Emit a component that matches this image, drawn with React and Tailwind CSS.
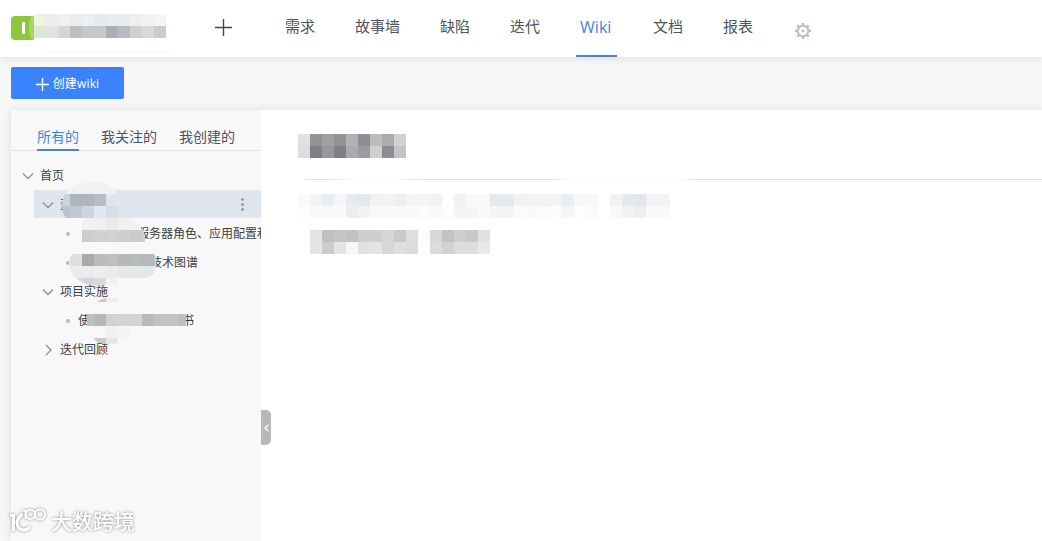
import { clsx } from 'clsx';

const NAV_ITEMS = ['需求', '故事墙', '缺陷', '迭代', 'Wiki', '文档', '报表'];
const TABS = ['所有的', '我关注的', '我创建的'];
const CELL = 12;

const TITLE_ROWS = [
  ['#e0e1e3', '#929397', '#9fa0a3', '#929397', '#b1b2b6', '#8e8f94', '#bbbcbe', '#abacaf', '#d0d1d3'],
  ['#dddee0', '#7e7f83', '#96979b', '#7f8084', '#a9aaad', '#9b9ca1', '#cfcfd2', '#8c8d92', '#c2c3c5'],
];

const META_ROWS = [
  ['#f9fafa', '#f3f4f6', '#ebeef1', '#f4f6f8', '#e7eaee', '#e4e8ec', '#f0f2f4', '#f1f3f4', '#edf0f3', '#f2f4f6', '#f4f5f7', '#f0f2f4', '#fdfefe', '#f0f3f5', '#f7f8fa', '#f7f8fa', '#e5e9ec', '#e5e9ec', '#f0f2f4', '#f1f3f4', '#f1f3f4', '#f2f3f5', '#ebeef1', '#f5f7f8', '#f5f7f8', null, '#f0f2f4', '#e5e9ec', '#e3e7eb', '#f1f3f5', '#f1f3f5'],
  ['#fdfdfd', '#f8f9fb', '#f7f8fa', '#fafafb', '#ebedf1', '#f0f1f4', '#f8f9fa', '#fafafb', '#fafafb', '#fafafb', '#fcfdfd', '#fafafa', '#fdfdfd', '#f4f5f7', '#f4f5f7', '#f8f9fa', '#f4f5f7', '#f2f4f5', '#fbfbfc', '#f9fafb', '#fafbfc', '#fbfcfc', '#f3f5f7', '#fdfdfd', '#fafbfc', null, '#f8f9fb', '#f0f2f4', '#eceef1', '#f8f9fa', '#f8f9fa'],
];

const BODY_ROWS = [
  ['#e4e4e4', '#c0c0c0', '#c5c5c5', '#c1c1c1', '#cecece', '#cfcfcf', '#d6d6d6', '#cacaca', '#dedede', '#fcfcfc', '#d8d8d8', '#c3c3c3', '#cfcfcf', '#c8c8c8', '#e1e1e1'],
  ['#e4e4e4', '#cccccc', '#e4e4e4', '#f7f7f7', '#e1e1e1', '#e4e4e4', '#d7d7d7', '#dfdfdf', '#dcdcdc', '#fdfdfd', '#dcdcdc', '#d2d2d2', '#dddddd', '#dddddd', '#e8e8e8'],
];

const LOGO_ROWS = [
  ['#edf4e1', '#ededee', '#f0f0f1', '#ebecec', '#eeeff0', '#e8e9ea', '#ebecee', '#e9eaec', '#eef0f0', '#f1f2f2', '#f4f5f5'],
  ['#dfe6d6', '#e0e2e4', '#d4d6d9', '#bcc0c4', '#c6c9cc', '#c6c9cc', '#abb0b6', '#b7bbc2', '#ced0d4', '#d8d9dd', '#c9ccd0'],
];

function Mosaic({ rows, className }) {
  return (
    <div className={clsx('w-fit', className)}>
      {rows.map((row, y) => (
        <div key={y} className="flex">
          {row.map((color, x) => (
            <span key={x} className="size-3" style={{ backgroundColor: color ?? 'transparent' }} />
          ))}
        </div>
      ))}
    </div>
  );
}

function Cells({ x, y, colors }) {
  return colors.map((color, i) => (
    <rect key={i} x={x + i * CELL} y={y} width={CELL} height={CELL} fill={color} />
  ));
}

function Chevron({ open, className }) {
  return (
    <svg className={clsx('shrink-0', className)} width="12" height="12" viewBox="0 0 12 12" fill="none" stroke="#8a94a3" strokeWidth="1.4">
      <path d={open ? 'M1 3.5 6 8.5 11 3.5' : 'M4 1 9 6 4 11'} />
    </svg>
  );
}

function PlusIcon({ size, className }) {
  return (
    <svg className={className} width={size} height={size} viewBox={`0 0 ${size} ${size}`} fill="none" stroke="currentColor" strokeWidth="1.4">
      <path d={`M${size / 2} 0V${size}M0 ${size / 2}H${size}`} />
    </svg>
  );
}

function GearIcon() {
  return (
    <svg className="mt-2 ml-11" width="16" height="16" viewBox="0 0 16 16" fill="none" stroke="#b4bfc3">
      <circle cx="8" cy="8" r="5.3" strokeWidth="1.9" />
      <circle cx="8" cy="8" r="1.4" fill="#b4bfc3" stroke="none" />
      <path strokeWidth="2.4" d="M8 0v2M8 14v2M0 8h2M14 8h2M2.3 2.3l1.4 1.4M12.3 12.3l1.4 1.4M2.3 13.7l1.4-1.4M12.3 3.7l1.4-1.4" />
    </svg>
  );
}

function Header() {
  return (
    <header className="relative z-10 flex h-[57px] shrink-0 items-start bg-white shadow-[0_1px_8px_rgba(0,20,40,0.11)]">
      <div className="relative mt-4 ml-[11px] flex h-6 w-[155px] items-center rounded-sm">
        <span className="flex h-6 w-6 items-center justify-center rounded-l-sm bg-[#8bc83c]">
          <i className="h-3 w-[3px] bg-white" />
        </span>
        <svg className="absolute -top-2 left-0" width="165" height="48" viewBox="11 8 165 48">
          <path d="M34 16v24h-2c-4-6-4-18-1-24Z" fill="#a5d46b" />
          <path d="M34 14h132v34H40q-6-4-6-10Z" fill="#fff" />
          <path d="M39 50h132q-5 4-17 4l-38-1H55q-12 0-16-3Z" fill="#f9fafa" />
        </svg>
        <Mosaic rows={LOGO_ROWS} className="absolute -top-0.5 left-[23px]" />
      </div>
      <PlusIcon size={17} className="mt-[19px] ml-[49px] text-[#414854]" />
      <nav className="ml-[49px] flex h-[57px] gap-8">
        {NAV_ITEMS.map((item) => (
          <a
            key={item}
            className={clsx(
              'h-full border-b-2 px-1 leading-[22px]',
              item === 'Wiki'
                ? 'w-[41px] border-[#4a83d4] pt-4 text-[16px] text-[#4184e4]'
                : 'border-transparent pt-[15px] text-[15px] text-[#4d545e]',
            )}
          >
            {item}
          </a>
        ))}
      </nav>
      <div className="-ml-1.5 pt-[15px]">
        <GearIcon />
      </div>
    </header>
  );
}

function TreeItem({ label, icon, className }) {
  return (
    <li className={clsx('flex h-[29px] items-center whitespace-nowrap', className)}>
      {icon === 'dot' ? (
        <span className="mr-2 size-1 shrink-0 rounded-full bg-[#b3b9c1]" />
      ) : (
        <Chevron open={icon === 'open'} className="mr-1.5" />
      )}
      {label}
    </li>
  );
}

// Erased patches over the private parts of the tree labels.
function TreeSmudges() {
  return (
    <svg className="pointer-events-none absolute top-[70px] left-[50px]" width="140" height="170" viewBox="61 180 140 170">
      <defs>
        <clipPath id="smudge-a">
          <path d="M62 206q0-12 8-17 8-7 24-7t24 12v24H67q-5-4-5-12Z" />
        </clipPath>
        <clipPath id="smudge-b">
          <path d="M82 218h40q16 2 20 12h2l1 12H82Z" />
        </clipPath>
        <clipPath id="smudge-c">
          <path d="M72 254h82q3 3 2 12-2 12-12 12h-26v6q-24 4-34-1-14-6-15-17 0-8 3-12Z" />
        </clipPath>
      </defs>
      <g clipPath="url(#smudge-a)">
        <rect x="60" y="180" width="60" height="14" fill="#eff1f3" />
        <Cells x={58} y={194} colors={['#ccd3dc', '#adb5be', '#b0b6bf', '#b7bdc7', '#dfe5ec']} />
        <Cells x={58} y={206} colors={['#b9c2cd', '#bfc8d3', '#cdd5de', '#e0e7ef', '#d5dee6']} />
      </g>
      <g clipPath="url(#smudge-b)">
        <Cells x={82} y={218} colors={['#f1f1f2', '#efefef', '#e9eaeb', '#eeeff0', '#f1f1f2', '#f2f2f3']} />
        <Cells x={82} y={230} colors={['#cdcdce', '#d0d0d1', '#d2d2d3', '#cfcfd0', '#cacbcc', '#cfd0d1']} />
      </g>
      <g clipPath="url(#smudge-c)">
        <Cells x={58} y={254} colors={['#eeeeef', '#dedfe0', '#a9aaac', '#babbbd', '#bdbec0', '#b5b7b8', '#b9babc', '#b7b8ba', '#c7c8ca']} />
        <Cells x={58} y={266} colors={['#efefef', '#ebebec', '#ececed', '#eeeeef', '#eaeaeb', '#e4e8e7', '#e5e8e8', '#e4e7e7', '#eaecec']} />
        <Cells x={70} y={278} colors={['#dbdcdd', '#d3d4d5', '#d9dadb', '#f1f1f1']} />
      </g>
      <path d="M97 302q4-3 9-4v4Z" fill="#c7c8ca" />
      <path d="M106 298h12v4h-12Z" fill="#ececed" />
      <Cells x={94} y={314} colors={['#b6b7ba', '#d1d2d5', '#d3d4d6', '#d3d4d6', '#b9babd', '#c1c2c4', '#c3c4c6']} />
      <rect x="87" y="314" width="7" height="12" fill="#bebfc2" />
      <rect x="178" y="314" width="8" height="12" fill="#bcbdc0" />
      <Cells x={106} y={326} colors={['#f0f1f1', '#f3f4f4']} />
      <path d="M93 338h13v7q-8-1-13-7Z" fill="#c8c9cb" />
      <path d="M106 338h12v5l-12 2Z" fill="#e7e7e8" />
    </svg>
  );
}

function Sidebar() {
  return (
    <aside className="relative w-[250px] shrink-0 bg-[#f8f8f8] text-[#3a3f48]">
      <div className="flex h-[41px] gap-[22px] border-b border-[#e0e3e8] pl-[26px]">
        {TABS.map((tab, i) => (
          <button
            key={tab}
            className={clsx(
              'h-[41px] border-b-2 pt-3.5 text-[14px] leading-5',
              i === 0 ? 'border-[#4a83d4] text-[#4184e4]' : 'border-transparent text-[#4d545e]',
            )}
          >
            {tab}
          </button>
        ))}
      </div>
      <ul className="overflow-hidden pt-2.5 text-[12px]">
        <TreeItem icon="open" label="首页" className="pt-px pl-[11px]" />
        <li className="mb-px ml-[23px] flex h-[28px] items-center bg-[#dfe5ed] pt-px pl-2">
          <Chevron open className="mr-1.5" />
          <span className="w-3">蓝</span>
          <svg className="ml-auto mr-[17px]" width="3" height="13" viewBox="0 0 3 13" fill="#7f8997">
            <circle cx="1.5" cy="1.5" r="1.3" />
            <circle cx="1.5" cy="6.5" r="1.3" />
            <circle cx="1.5" cy="11.5" r="1.3" />
          </svg>
        </li>
        <TreeItem icon="dot" label={<span className="pl-[59px]">服务器角色、应用配置和</span>} className="pl-[55px]" />
        <TreeItem icon="dot" label={<span className="pl-[72px]">技术图谱</span>} className="pl-[55px]" />
        <TreeItem icon="open" label="项目实施" className="relative z-10 pl-[31px]" />
        <TreeItem
          icon="dot"
          label={<><span>使</span><span className="ml-[92px]">书</span></>}
          className="pl-[55px]"
        />
        <TreeItem icon="closed" label="迭代回顾" className="relative z-10 pl-[31px]" />
      </ul>
      <TreeSmudges />
      <button className="absolute top-[300px] left-full flex h-[35px] w-2.5 items-center justify-center rounded-r-[5px] bg-[#b8b8b8]">
        <svg width="5" height="8" viewBox="0 0 5 8" fill="none" stroke="#fff" strokeWidth="1.5">
          <path d="M4.5.7 1 4l3.5 3.3" />
        </svg>
      </button>
    </aside>
  );
}

function Content() {
  return (
    <main className="min-w-0 flex-1 bg-white pl-[37px]">
      <Mosaic rows={TITLE_ROWS} className="mt-6" />
      <div className="mt-[21px] ml-[7px] h-px bg-[linear-gradient(to_right,#e0e0e2_0,#e0e0e2_25px,#fafafa_50px,#fafafa_90px,#e0e0e2_115px,#e0e0e2_250px,#fafafa_262px,#fafafa_378px,#e0e0e2_390px)]" />
      <Mosaic rows={META_ROWS} className="mt-[14px]" />
      <Mosaic rows={BODY_ROWS} className="mt-3 ml-3" />
    </main>
  );
}

function Watermark() {
  return (
    <div className="absolute top-[506px] left-[9px] flex text-white drop-shadow-[0_0_1.5px_rgba(0,0,0,0.45)]">
      <svg width="39" height="28" viewBox="0 0 39 28" fill="none" stroke="currentColor">
        <path strokeWidth="3" d="M1 9.5h3.5V25" />
        <path strokeWidth="3" d="M13 7.5 9 13q-2.500 5 1 9 5 4.500 11-1" />
        <path strokeWidth="1.8" d="M14 4.500h2.500V13" />
        <circle cx="21.500" cy="8.500" r="4.600" strokeWidth="1.8" />
        <circle cx="31" cy="8.500" r="5.200" strokeWidth="1.8" />
      </svg>
      <span className="ml-[3px] text-[21px] leading-[31px] font-medium">大数跨境</span>
    </div>
  );
}

export default function App() {
  return (
    <div className="relative flex h-[541px] w-[1042px] flex-col overflow-hidden bg-[#f7f7f7] font-['Open_Sans','Noto_Sans_CJK_SC',sans-serif]">
      <Header />
      <div className="flex h-[53px] shrink-0 items-start pt-2.5 pl-[11px]">
        <button className="flex h-8 w-[113px] items-center justify-center gap-1 rounded-xs bg-[#3a83fc] pt-0.5 text-[12px] tracking-[0.15px] text-white">
          <PlusIcon size={13} />
          创建wiki
        </button>
      </div>
      <div className="ml-[11px] flex flex-1 shadow-[0_0_9px_rgba(0,20,40,0.1)]">
        <Sidebar />
        <Content />
      </div>
      <Watermark />
    </div>
  );
}
